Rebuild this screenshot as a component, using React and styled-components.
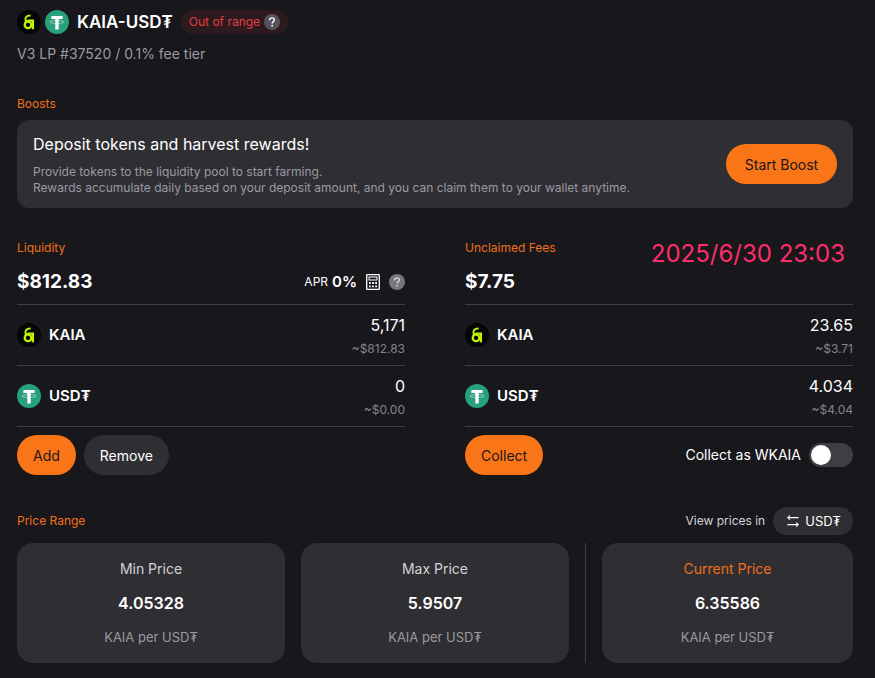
import React from 'react'
import { useState } from 'react'

import styled, { createGlobalStyle } from 'styled-components'


const GlobalStyle = createGlobalStyle`
  * {
    box-sizing: border-box;
  }

  body {
    margin: 0;
    background: #18171c;
    color: #ffffff;
    font-family: Inter, "Liberation Sans", sans-serif;
    font-size: 14px;
    line-height: 20px;
  }

  h1, h2, h3, p {
    margin: 0;
    font-weight: 400;
  }

  button {
    font-family: inherit;
    cursor: pointer;
  }
`

const Page = styled.main`
  display: flex;
  flex-direction: column;
  gap: 32px;
  padding: 10px 22px 15px 17px;
`

const Header = styled.header`
  display: flex;
  flex-direction: column;
  gap: 10px;
`

const TitleRow = styled.div`
  display: flex;
  align-items: center;
  gap: 8px;
`

const Logos = styled.div`
  display: flex;
  gap: 4px;
`

const Title = styled.h1`
  && {
    font-size: 17px;
    font-weight: 600;
    line-height: 24px;
  }
`

const StatusPill = styled.span`
  display: flex;
  align-items: center;
  gap: 4px;
  height: 24px;
  padding: 0 8px;
  border-radius: 12px;
  background: #2d1a1e;
  color: #e23e42;
  font-size: 12px;
`

const Subtitle = styled.p`
  color: #9b9aa2;
`

const Section = styled.section`
  position: relative;
  display: flex;
  flex-direction: column;
  min-width: 0;
`

const SectionTitle = styled.h2`
  && {
    color: #f0701a;
    font-size: 12px;
    line-height: 16px;
  }
`

const BoostPanel = styled.div`
  display: flex;
  justify-content: space-between;
  align-items: center;
  gap: 16px;
  margin-top: 8px;
  padding: 12px 16px;
  border-radius: 12px;
  background: #2f2e33;
`

const BoostTitle = styled.h3`
  && {
    margin-bottom: 8px;
    font-size: 16px;
    line-height: 24px;
  }
`

const BoostText = styled.p`
  color: #9b9aa2;
  font-size: 12px;
  line-height: 16px;
`

const Button = styled.button`
  flex-shrink: 0;
  height: 40px;
  padding: 0 16px;
  border: 0;
  border-radius: 20px;
  background: ${props => props.$secondary ? '#2f2e33' : '#fa7517'};
  color: ${props => props.$secondary ? '#ffffff' : '#18171c'};
  font-size: 14px;
`

const BoostButton = styled(Button)`
  min-width: 111px;
`

const Columns = styled.div`
  display: grid;
  grid-template-columns: 1fr 1fr;
  gap: 60px;
`

const TotalRow = styled.div`
  display: flex;
  justify-content: space-between;
  align-items: center;
  margin-top: 12px;
  padding-bottom: 8px;
  border-bottom: 1px solid #3f3e44;
`

const Total = styled.strong`
  font-size: 19px;
  font-weight: 700;
  line-height: 28px;
`

const Apr = styled.div`
  display: flex;
  align-items: center;
  gap: 4px;
  font-size: 12px;
`

const AprValue = styled.strong`
  margin-right: 4px;
  font-size: 15px;
  font-weight: 600;
`

const IconButton = styled.button`
  display: flex;
  padding: 0;
  border: 0;
  background: none;
  color: inherit;

  & + & {
    margin-left: 4px;
  }
`

const TokenRow = styled.div`
  display: flex;
  justify-content: space-between;
  align-items: center;
  padding: 8px 0;
  border-bottom: 1px solid #3f3e44;
`

const TokenName = styled.div`
  display: flex;
  align-items: center;
  gap: 8px;
  font-size: 15px;
  font-weight: 600;
`

const TokenAmount = styled.div`
  display: flex;
  flex-direction: column;
  gap: 4px;
  font-size: 16px;
  line-height: 24px;
  text-align: right;
`

const TokenValue = styled.span`
  color: #85848c;
  font-size: 12px;
  line-height: 16px;
`

const Actions = styled.div`
  display: flex;
  align-items: center;
  gap: 8px;
  margin-top: 8px;
`

const SwitchLabel = styled.label`
  display: flex;
  align-items: center;
  gap: 8px;
  margin-left: auto;
  cursor: pointer;
`

const Switch = styled.input`
  appearance: none;
  display: flex;
  align-items: center;
  width: 44px;
  height: 24px;
  margin: 0;
  padding: 0 2px;
  border-radius: 12px;
  background: #3f3e44;
  cursor: pointer;

  &::before {
    content: '';
    width: 20px;
    height: 20px;
    border-radius: 50%;
    background: #ffffff;
  }

  &:checked {
    justify-content: flex-end;
    background: #fa7517;
  }
`

const Timestamp = styled.time`
  position: absolute;
  top: 0;
  right: 8px;
  color: #ff2d6b;
  font-size: 24px;
  line-height: 28px;
`

const RangeHeader = styled.div`
  display: flex;
  justify-content: space-between;
  align-items: center;
`

const ViewPrices = styled.div`
  display: flex;
  align-items: center;
  gap: 8px;
  color: #d4d3d8;
  font-size: 12px;
`

const ToggleButton = styled.button`
  display: flex;
  align-items: center;
  gap: 4px;
  height: 28px;
  padding: 0 12px;
  border: 0;
  border-radius: 14px;
  background: #2f2e33;
  color: #ffffff;
  font-size: 13px;
`

const Prices = styled.div`
  display: grid;
  grid-template-columns: repeat(3, 1fr);
  gap: 16px;
  margin-top: 8px;
`

const CurrentPrice = styled.div`
  padding-left: 16px;
  border-left: 1px solid #3f3e44;
`

const Card = styled.div`
  display: flex;
  flex-direction: column;
  align-items: center;
  gap: 12px;
  padding: 16px;
  border-radius: 16px;
  background: #2f2e33;
`

const CardTitle = styled.h3`
  && {
    color: ${props => props.$active ? '#f0701a' : '#d4d3d8'};
    font-size: 14px;
  }
`

const CardPrice = styled.strong`
  font-size: 16px;
  font-weight: 600;
  line-height: 24px;
`

const CardUnit = styled.span`
  color: #9b9aa2;
  font-size: 13px;
`


const KaiaLogo = () => (
  <svg width="24" height="24" viewBox="0 0 24 24" aria-hidden="true">
    <circle cx="12" cy="12" r="12" fill="#060606" />
    <g fill="none" stroke="#bff009" strokeWidth="2.3">
      <circle cx="11" cy="14.9" r="3.3" />
      <path d="M11 10.6H15.9V19.3" />
      <path d="M7.8 12.6C8.6 11.2 9.6 10.6 11.2 10.6" strokeWidth="1.6" />
      <path d="M9.1 11.6C7.3 8.2 8.9 5.5 13.6 5.5" strokeWidth="2" />
    </g>
  </svg>
)

const TetherLogo = () => (
  <svg width="24" height="24" viewBox="0 0 24 24" aria-hidden="true">
    <circle cx="12" cy="12" r="12" fill="#26a17b" />
    <path d="M6.4 6h11.2v3.1h-3.9v10.3h-3.4V9.1H6.4z" fill="#ffffff" />
    <ellipse cx="12" cy="12" rx="7.2" ry="1.5" fill="none" stroke="#ffffff" strokeWidth="0.6" opacity="0.75" />
  </svg>
)

const HelpIcon = ({ color = '#54535c', mark = '#ffffff' }) => (
  <svg width="16" height="16" viewBox="0 0 16 16" aria-hidden="true">
    <circle cx="8" cy="8" r="8" fill={color} />
    <path d="M5.6 6.2C5.6 4.7 6.6 3.9 8 3.9s2.4.8 2.4 2.1c0 1.6-2.3 1.7-2.3 3.5" fill="none" stroke={mark} strokeWidth="1.4" />
    <circle cx="8.1" cy="11.7" r="0.9" fill={mark} />
  </svg>
)

const CalculatorIcon = () => (
  <svg width="16" height="16" viewBox="0 0 16 16" fill="none" stroke="#ffffff" aria-hidden="true">
    <rect x="1.7" y="0.7" width="12.6" height="14.6" rx="0.6" strokeWidth="1.3" />
    <rect x="4" y="3" width="8" height="3" strokeWidth="1" />
    <path d="M4 9h8M4 12.3h8" strokeWidth="1.8" strokeDasharray="1.8 1.3" />
  </svg>
)

const SwapIcon = () => (
  <svg width="16" height="16" viewBox="0 0 16 16" fill="none" stroke="#ffffff" strokeWidth="1.1" aria-hidden="true">
    <path d="M13.6 4.6H2.8M4.8 2.6l-2 2 2 2" />
    <path d="M2.4 11.6h10.8M11.2 9.6l2 2-2 2" />
  </svg>
)


const logos = {
  'KAIA': <KaiaLogo />,
  'USD₮': <TetherLogo />,
}

const liquidity = [
  { name: 'KAIA', amount: '5,171', value: '~$812.83' },
  { name: 'USD₮', amount: '0', value: '~$0.00' },
]

const fees = [
  { name: 'KAIA', amount: '23.65', value: '~$3.71' },
  { name: 'USD₮', amount: '4.034', value: '~$4.04' },
]

const TokenList = ({ tokens }) => tokens.map(token => (
  <TokenRow key={token.name}>
    <TokenName>
      {logos[token.name]}
      {token.name}
    </TokenName>
    <TokenAmount>
      {token.amount}
      <TokenValue>{token.value}</TokenValue>
    </TokenAmount>
  </TokenRow>
))

const PriceCard = ({ title, price, active }) => (
  <Card>
    <CardTitle $active={active}>{title}</CardTitle>
    <CardPrice>{price}</CardPrice>
    <CardUnit>KAIA per USD₮</CardUnit>
  </Card>
)


const App = () => {

  const [wrapped, setWrapped] = useState(false)

  return (
    <>
      <GlobalStyle />
      <Page>
        <Header>
          <TitleRow>
            <Logos>
              <KaiaLogo />
              <TetherLogo />
            </Logos>
            <Title>KAIA-USD₮</Title>
            <StatusPill>
              Out of range
              <IconButton type="button" aria-label="Out of range help"><HelpIcon /></IconButton>
            </StatusPill>
          </TitleRow>
          <Subtitle>V3 LP #37520 / 0.1% fee tier</Subtitle>
        </Header>

        <Section>
          <SectionTitle>Boosts</SectionTitle>
          <BoostPanel>
            <div>
              <BoostTitle>Deposit tokens and harvest rewards!</BoostTitle>
              <BoostText>Provide tokens to the liquidity pool to start farming.</BoostText>
              <BoostText>Rewards accumulate daily based on your deposit amount, and you can claim them to your wallet anytime.</BoostText>
            </div>
            <BoostButton type="button">Start Boost</BoostButton>
          </BoostPanel>
        </Section>

        <Columns>
          <Section>
            <SectionTitle>Liquidity</SectionTitle>
            <TotalRow>
              <Total>$812.83</Total>
              <Apr>
                APR
                <AprValue>0%</AprValue>
                <IconButton type="button" aria-label="APR calculator"><CalculatorIcon /></IconButton>
                <IconButton type="button" aria-label="APR help"><HelpIcon color="#77767e" mark="#d4d3d8" /></IconButton>
              </Apr>
            </TotalRow>
            <TokenList tokens={liquidity} />
            <Actions>
              <Button type="button">Add</Button>
              <Button type="button" $secondary>Remove</Button>
            </Actions>
          </Section>

          <Section>
            <SectionTitle>Unclaimed Fees</SectionTitle>
            <Timestamp dateTime="2025-06-30T23:03">2025/6/30 23:03</Timestamp>
            <TotalRow>
              <Total>$7.75</Total>
            </TotalRow>
            <TokenList tokens={fees} />
            <Actions>
              <Button type="button">Collect</Button>
              <SwitchLabel>
                Collect as WKAIA
                <Switch
                  type="checkbox"
                  role="switch"
                  checked={wrapped}
                  onChange={event => setWrapped(event.target.checked)}
                />
              </SwitchLabel>
            </Actions>
          </Section>
        </Columns>

        <Section>
          <RangeHeader>
            <SectionTitle>Price Range</SectionTitle>
            <ViewPrices>
              View prices in
              <ToggleButton type="button">
                <SwapIcon />
                USD₮
              </ToggleButton>
            </ViewPrices>
          </RangeHeader>
          <Prices>
            <PriceCard title="Min Price" price="4.05328" />
            <PriceCard title="Max Price" price="5.9507" />
            <CurrentPrice>
              <PriceCard title="Current Price" price="6.35586" active />
            </CurrentPrice>
          </Prices>
        </Section>
      </Page>
    </>
  )
}

export default App
